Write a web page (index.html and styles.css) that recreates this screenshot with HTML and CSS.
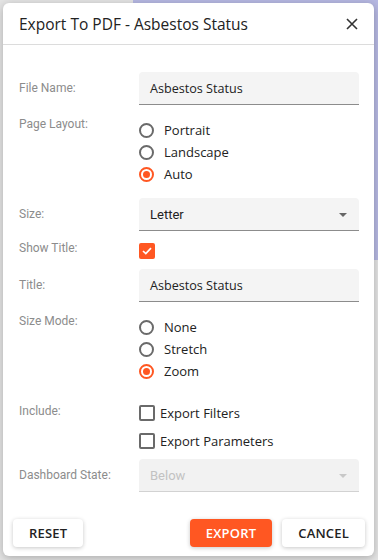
FILE: index.html
```html
<!DOCTYPE html>
<html lang="en">
<head>
    <meta charset="UTF-8">
    <title>Export To PDF</title>
    <link rel="stylesheet" href="styles.css">
</head>
<body>
    <div class="dialog">
        <div class="dialog-header">
            <span class="dialog-title">Export To PDF - Asbestos Status</span>
            <svg class="close-icon" width="12" height="12" viewBox="0 0 12 12">
                <path d="M1 1 L11 11 M11 1 L1 11" stroke="#333" stroke-width="1.6" fill="none"/>
            </svg>
        </div>

        <div class="dialog-body">
            <div class="form-row">
                <label class="form-label">File Name:</label>
                <div class="text-field">Asbestos Status</div>
            </div>

            <div class="form-row">
                <label class="form-label">Page Layout:</label>
                <div class="radio-group">
                    <div class="radio-item"><span class="radio"></span>Portrait</div>
                    <div class="radio-item"><span class="radio"></span>Landscape</div>
                    <div class="radio-item"><span class="radio checked"></span>Auto</div>
                </div>
            </div>

            <div class="form-row">
                <label class="form-label">Size:</label>
                <div class="text-field select">Letter<span class="arrow"></span></div>
            </div>

            <div class="form-row">
                <label class="form-label label-tight">Show Title:</label>
                <div class="check-single">
                    <span class="checkbox checked">
                        <svg width="10" height="8" viewBox="0 0 10 8">
                            <path d="M1 4 L3.8 6.6 L9 1.2" stroke="#fff" stroke-width="1.7" fill="none"/>
                        </svg>
                    </span>
                </div>
            </div>

            <div class="form-row">
                <label class="form-label">Title:</label>
                <div class="text-field">Asbestos Status</div>
            </div>

            <div class="form-row">
                <label class="form-label">Size Mode:</label>
                <div class="radio-group">
                    <div class="radio-item"><span class="radio"></span>None</div>
                    <div class="radio-item"><span class="radio"></span>Stretch</div>
                    <div class="radio-item"><span class="radio checked"></span>Zoom</div>
                </div>
            </div>

            <div class="form-row">
                <label class="form-label">Include:</label>
                <div class="check-group">
                    <div class="check-item"><span class="checkbox"></span>Export Filters</div>
                    <div class="check-item"><span class="checkbox"></span>Export Parameters</div>
                </div>
            </div>

            <div class="form-row">
                <label class="form-label">Dashboard State:</label>
                <div class="text-field select disabled">Below<span class="arrow"></span></div>
            </div>
        </div>

        <div class="dialog-footer">
            <button class="btn">RESET</button>
            <div class="footer-right">
                <button class="btn primary">EXPORT</button>
                <button class="btn">CANCEL</button>
            </div>
        </div>
    </div>
</body>
</html>
```

FILE: styles.css
```css
body { margin: 0; padding: 3px 4px 4px 3px; font-family: "Open Sans", sans-serif; color: #222;
       background: linear-gradient(#b6b8e2, #b6b8e2) no-repeat 133px 0 / 245px 260px, #e4e4e4; }

.dialog { width: 371px; height: 553px; background: #fff; border-radius: 6px; box-shadow: 0 2px 8px rgba(0,0,0,.25);
          display: flex; flex-direction: column; }

.dialog-header { height: 42px; box-sizing: border-box; border-bottom: 1px solid #dcdcdc; display: flex;
                 align-items: center; justify-content: space-between; padding: 0 16px 0 16px; }
.dialog-title { font-size: 15.5px; color: #222; }

.dialog-body { padding: 27px 15px 0 16px; display: flex; flex-direction: column; gap: 3px; }
.form-row { display: grid; grid-template-columns: 120px 1fr; align-items: start; }
.form-label { font-family: Roboto, sans-serif; font-size: 12px; color: #8c8c8c; line-height: 16px; padding-top: 8px; }
.label-tight { padding-top: 6px; }

.text-field { height: 33px; box-sizing: border-box; background: #f4f4f4; border-radius: 4px 4px 0 0;
              border-bottom: 1px solid #8c8c8c; padding: 2px 11px 0; font-size: 12.6px; line-height: 30px; }
.select { font-family: Roboto, sans-serif; font-size: 13px; display: flex; justify-content: space-between; align-items: center; }
.arrow { width: 0; height: 0; border-left: 4px solid transparent; border-right: 4px solid transparent;
         border-top: 4px solid #666; margin-right: 1px; }
.disabled { background: #f2f2f2; color: #c2c2c2; border-bottom-color: #d2d2d2; }
.disabled .arrow { border-top-color: #c8c8c8; }

.radio-group { padding: 11px 0 10px; }
.radio-item { height: 22px; display: flex; align-items: center; font-size: 13px; }
.radio { width: 15px; height: 15px; box-sizing: border-box; border: 2px solid #6a6a6a; border-radius: 50%;
         margin-right: 10px; display: flex; align-items: center; justify-content: center; }
.radio.checked { border-color: #ff5722; }
.radio.checked::after { content: ""; width: 7px; height: 7px; border-radius: 50%; background: #ff5722; }

.check-single { padding: 9px 0 7px; height: 16px; }
.checkbox { width: 16px; height: 16px; box-sizing: border-box; border: 2px solid #6a6a6a; border-radius: 2px;
            display: flex; align-items: center; justify-content: center; margin-right: 5px; }
.checkbox.checked { background: #ff5722; border-color: #ff5722; }
.check-group { padding: 4px 0 1px; }
.check-item { height: 28px; display: flex; align-items: center; font-size: 13px; }

.dialog-footer { margin-top: auto; padding: 0 9px 9px 10px; display: flex; justify-content: space-between; }
.footer-right { display: flex; gap: 10px; }
.btn { height: 28px; padding: 0 16px; border: none; border-radius: 4px; background: #fff; color: #222;
       font-family: "Open Sans", sans-serif; font-size: 13px; font-weight: 600; letter-spacing: .2px;
       box-shadow: 0 1px 4px rgba(0,0,0,.22); cursor: pointer; }
.btn.primary { background: #ff5722; color: #fff; }
```
